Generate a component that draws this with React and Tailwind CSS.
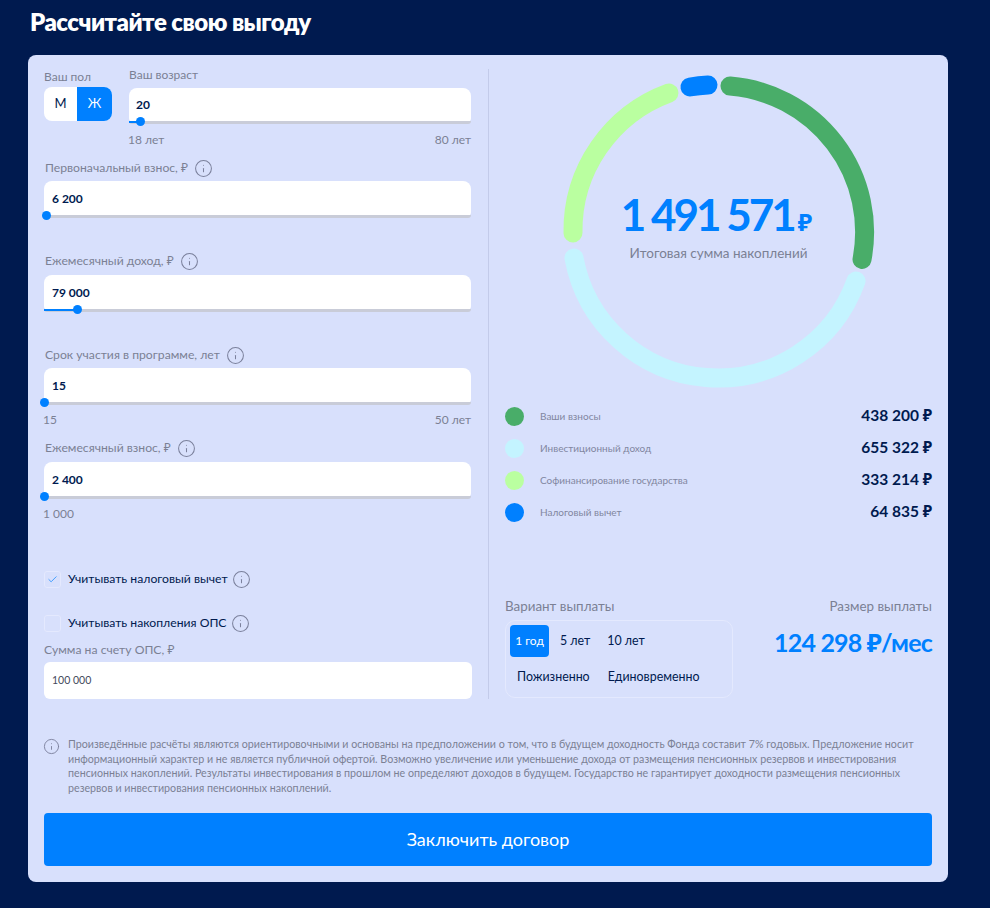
import { Info, Check } from "lucide-react";

function Hint({ className = "" }) {
  return <Info size={19} strokeWidth={1.3} className={`text-[#7b809c] shrink-0 ${className}`} />;
}

function Slider({ fill = 0 }) {
  return (
    <div className="relative h-0">
      <div className="absolute left-0 right-0 -top-px h-[3px] rounded-b-sm bg-[#c9ccd8]" />
      {fill > 0 && <div className="absolute left-0 -top-px h-[2px] bg-[#0080ff]" style={{ width: fill }} />}
      <div
        className="absolute -top-[5px] -ml-1 size-[9px] rounded-full bg-[#0080ff]"
        style={{ left: fill }}
      />
    </div>
  );
}

function Field({ label, value, fill, min, max, gap = "mb-[5px]" }) {
  return (
    <div>
      <div className={`flex h-4 items-center pl-px text-[12.2px] text-[#7b8094] ${gap}`}>
        <span>{label}</span>
        <Hint className="ml-1.5" />
      </div>
      <div className="flex h-[35px] items-center rounded-t-lg rounded-b-sm bg-white pl-2 text-xs font-bold text-[#001a4f]">
        {value}
      </div>
      <Slider fill={fill} />
      <div className="flex h-[37px] justify-between pt-[9px] text-xs leading-4 text-[#7b8094]">
        <span className="-ml-px">{min}</span>
        <span>{max}</span>
      </div>
    </div>
  );
}

function Legend({ color, label, value }) {
  return (
    <div className="flex h-8 items-center">
      <span className={`size-[19px] rounded-full ${color}`} />
      <span className="ml-4 flex-1 text-[10px] text-[#8186a0]">{label}</span>
      <span className="text-[15.5px] font-bold text-[#001a4f]">{value}</span>
    </div>
  );
}

function Ring() {
  // дуги заданы концами на окружности r=146.5, центр (158,158)
  return (
    <svg width="316" height="316" viewBox="0 0 316 316" fill="none" strokeWidth="19" strokeLinecap="round">
      <path d="M169 13 A146.5 146.5 0 0 1 301 186.500" stroke="#49ad69" />
      <path d="M295 208 A146.5 146.5 0 0 1 13 185" stroke="#c4f4ff" />
      <path d="M12 160 A146.5 146.5 0 0 1 108 20" stroke="#baffa0" />
      <path d="M129 14 A146.500 146.500 0 0 1 147 12" stroke="#0080ff" />
    </svg>
  );
}

export default function App() {
  return (
    <div className="min-h-[908px] bg-[#001a4f] font-['Lato','Noto_Sans',sans-serif]">
      <h1 className="flex h-[55px] items-start pl-[30px] pt-[6px] text-[24px] leading-8 font-extrabold tracking-[-0.5px] text-white">
        Рассчитайте свою выгоду
      </h1>
      <div className="ml-[28px] w-[920px] rounded-lg bg-[#d8e0fc] px-4 pb-4">
        <div className="flex pt-[14px]">
          <div className="w-[428px] shrink-0">
            <div className="flex">
              <div className="w-[85px] shrink-0">
                <div className="flex h-4 items-center text-xs text-[#7b8094]">Ваш пол</div>
                <div className="mt-[2px] flex h-[34px] w-[68px] overflow-hidden rounded-lg bg-white text-[13px]">
                  <span className="flex w-[33px] items-center justify-center text-[#001a4f]">М</span>
                  <span className="flex flex-1 items-center justify-center bg-[#0080ff] text-white">Ж</span>
                </div>
              </div>
              <div className="flex-1 pr-px">
                <div className="-mt-[2px] flex h-4 items-center text-xs text-[#7b8094]">Ваш возраст</div>
                <div className="mt-[5px] flex h-[34px] items-center rounded-t-lg rounded-b-sm bg-white pl-[7px] text-xs font-bold text-[#001a4f]">
                  20
                </div>
                <Slider fill={11} />
                <div className="flex h-[38px] justify-between pt-[10px] text-xs leading-4 text-[#7b8094]">
                  <span className="-ml-px">18 лет</span>
                  <span>80 лет</span>
                </div>
              </div>
            </div>
            <div className="pr-px">
              <Field label="Первоначальный взнос, ₽" value="6 200" fill={2} />
              <Field label="Ежемесячный доход, ₽" value="79 000" fill={33} gap="mb-[6px]" />
              <Field label="Срок участия в программе, лет" value="15" fill={0} min="15" max="50 лет" />
              <Field label="Ежемесячный взнос, ₽" value="2 400" fill={0} min="1 000" gap="mb-[6px]" />
            </div>
            <label className="mt-[37px] flex h-[17px] items-center text-[12.2px] text-[#001a4f]">
              <span className="mr-[7px] flex size-[17px] items-center justify-center rounded-[3px] border border-[#e4e9fe]">
                <Check size={11} strokeWidth={1.5} className="text-[#0080ff]" />
              </span>
              Учитывать налоговый вычет
              <Hint className="ml-1" />
            </label>
            <label className="mt-[26px] flex h-[18px] items-center text-[12.2px] text-[#001a4f]">
              <span className="mr-[7px] size-[17px] rounded-[3px] border border-[#e4e9fe]" />
              Учитывать накопления ОПС
              <Hint className="ml-1" />
            </label>
            <div className="mt-[10px] mb-1 flex h-4 items-center text-[12.2px] text-[#7b8094]">Сумма на счету ОПС, ₽</div>
            <div className="flex h-[37px] items-center rounded-md bg-white pl-2 text-[10.5px] text-[#444a5c]">100 000</div>
          </div>
          <div className="mx-4 w-px bg-[#c3cbea]" />
          <div className="flex-1">
            <div className="relative mx-auto mt-1 w-[316px]">
              <Ring />
              <div className="absolute inset-x-0 top-[119px] text-center">
                <div className="pr-1 text-[44px] leading-[44px] font-bold tracking-[-3px] text-[#0080ff]">
                  1 491 571<span className="ml-1 text-[24px] tracking-normal">₽</span>
                </div>
                <div className="-mt-px text-[13.5px] text-[#7b8094]">Итоговая сумма накоплений</div>
              </div>
            </div>
            <div className="mt-[11px]">
              <Legend color="bg-[#49ad69]" label="Ваши взносы" value="438 200 ₽" />
              <Legend color="bg-[#c4f4ff]" label="Инвестиционный доход" value="655 322 ₽" />
              <Legend color="bg-[#baffa0]" label="Софинансирование государства" value="333 214 ₽" />
              <Legend color="bg-[#0080ff]" label="Налоговый вычет" value="64 835 ₽" />
            </div>
            <div className="mt-[70px] flex justify-between">
              <div>
                <div className="mb-[6px] h-4 text-[13.4px] leading-4 text-[#7b8094]">Вариант выплаты</div>
                <div className="h-[78px] w-[228px] rounded-[10px] border border-[#e4e9fe] p-1 text-[12.4px] text-[#001a4f]">
                  <div className="flex items-center">
                    <span className="flex h-8 w-[39px] items-center justify-center rounded-[4px] bg-[#0080ff] text-[12px] text-white">
                      1 год
                    </span>
                    <span className="ml-[11px]">5 лет</span>
                    <span className="ml-[17px]">10 лет</span>
                  </div>
                  <div className="mt-[11px] flex pl-[7px]">
                    <span>Пожизненно</span>
                    <span className="ml-[18px]">Единовременно</span>
                  </div>
                </div>
              </div>
              <div className="text-right">
                <div className="h-4 text-[13.4px] leading-4 text-[#7b8094]">Размер выплаты</div>
                <div className="mt-[12px] text-[25px] leading-8 font-bold tracking-[-0.8px] text-[#0080ff]">124 298 ₽/мес</div>
              </div>
            </div>
          </div>
        </div>
        <div className="mt-[38px] flex">
          <Hint className="-ml-px mr-2 mt-px !size-[17px]" />
          <p className="w-[860px] text-[10.7px] leading-[14.6px] text-[#7b8094]">
            Произведённые расчёты являются ориентировочными и основаны на предположении о том, что в будущем доходность Фонда составит 7% годовых. Предложение носит информационный характер и не является публичной офертой. Возможно увеличение или уменьшение дохода от размещения пенсионных резервов и инвестирования
            <br />
            пенсионных накоплений. Результаты инвестирования в прошлом не определяют доходов в будущем. Государство не гарантирует доходности размещения пенсионных
            <br />
            резервов и инвестирования пенсионных накоплений.
          </p>
        </div>
        <button className="mt-[18px] flex h-[53px] w-full items-center justify-center rounded-[4px] bg-[#0080ff] text-[18px] text-white">
          Заключить договор
        </button>
      </div>
    </div>
  );
}
